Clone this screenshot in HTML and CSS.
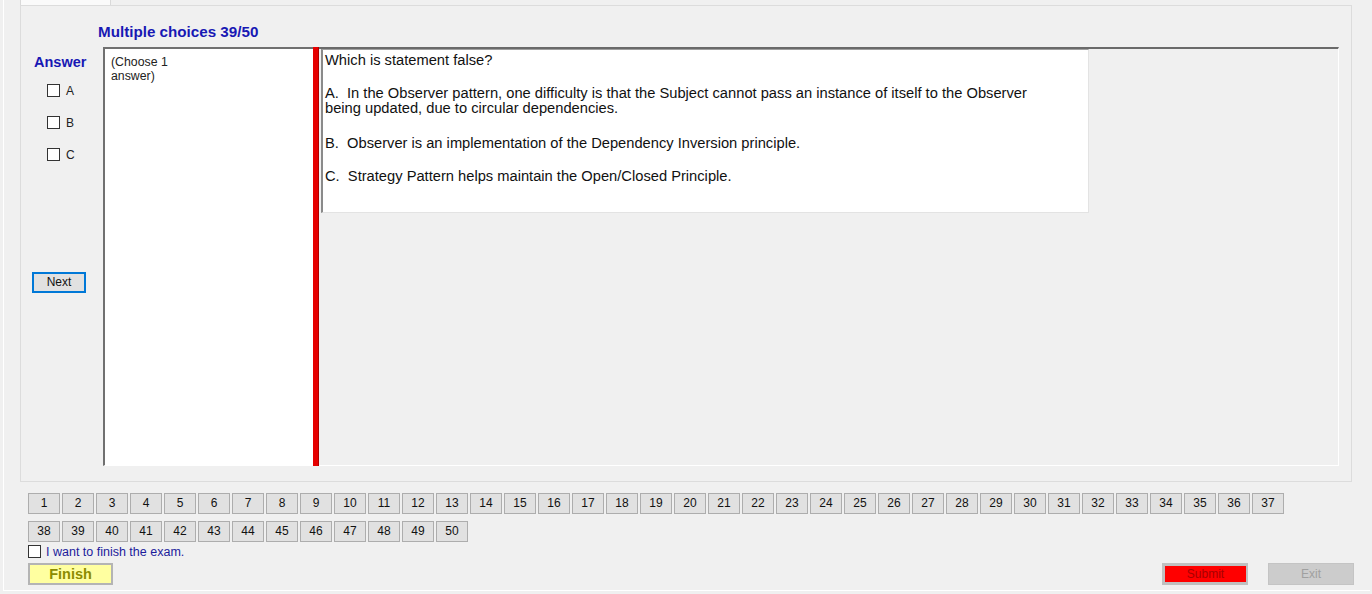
FILE: index.html
```html
<!DOCTYPE html>
<html>
<head>
<meta charset="utf-8">
<title>Exam</title>
<link rel="stylesheet" href="styles.css">
</head>
<body>
<div class="frame">
  <div class="tabstrip"><div class="tab"></div></div>
  <div class="tabpage">
    <div class="title">Multiple choices 39/50</div>
    <div class="main">
      <div class="answers">
        <div class="answer-label">Answer</div>
        <div class="options">
          <label class="opt"><span class="cb"></span><span>A</span></label>
          <label class="opt"><span class="cb"></span><span>B</span></label>
          <label class="opt"><span class="cb"></span><span>C</span></label>
        </div>
        <div class="next">Next</div>
      </div>
      <div class="choose"><div class="choose-text">(Choose 1 answer)</div></div>
      <div class="redbar"></div>
      <div class="qpanel">
        <div class="qbox">
          <p>Which is statement false?</p>
          <p class="wide">A.&nbsp; In the Observer pattern, one difficulty is that the Subject cannot pass an instance of itself to the Observer<br>being updated, due to circular dependencies.</p>
          <p>B.&nbsp; Observer is an implementation of the Dependency Inversion principle.</p>
          <p>C.&nbsp; Strategy Pattern helps maintain the Open/Closed Principle.</p>
        </div>
      </div>
    </div>
  </div>
  <div class="bottom">
    <div class="numrow">
      <span class="nb">1</span><span class="nb">2</span><span class="nb">3</span><span class="nb">4</span><span class="nb">5</span><span class="nb">6</span><span class="nb">7</span><span class="nb">8</span><span class="nb">9</span><span class="nb">10</span><span class="nb">11</span><span class="nb">12</span><span class="nb">13</span><span class="nb">14</span><span class="nb">15</span><span class="nb">16</span><span class="nb">17</span><span class="nb">18</span><span class="nb">19</span><span class="nb">20</span><span class="nb">21</span><span class="nb">22</span><span class="nb">23</span><span class="nb">24</span><span class="nb">25</span><span class="nb">26</span><span class="nb">27</span><span class="nb">28</span><span class="nb">29</span><span class="nb">30</span><span class="nb">31</span><span class="nb">32</span><span class="nb">33</span><span class="nb">34</span><span class="nb">35</span><span class="nb">36</span><span class="nb">37</span>
    </div>
    <div class="numrow row2">
      <span class="nb">38</span><span class="nb">39</span><span class="nb">40</span><span class="nb">41</span><span class="nb">42</span><span class="nb">43</span><span class="nb">44</span><span class="nb">45</span><span class="nb">46</span><span class="nb">47</span><span class="nb">48</span><span class="nb">49</span><span class="nb">50</span>
    </div>
    <label class="finish-check"><span class="cb"></span><span>I want to finish the exam.</span></label>
    <div class="actions">
      <div class="finish">Finish</div>
      <div class="submit">Submit</div>
      <div class="exit">Exit</div>
    </div>
  </div>
</div>
</body>
</html>
```
FILE: styles.css
```css
* { box-sizing: border-box; }
html, body { margin: 0; padding: 0; }
body {
  background: #f0f0f0;
  font-family: "Liberation Sans", Arial, sans-serif;
  width: 1372px;
  height: 594px;
  overflow: hidden;
}
.frame {
  margin-left: 3px;
  width: 1367px;
  height: 591px;
  border-left: 1px solid #ffffff;
  border-bottom: 1px solid #ffffff;
}
.tabstrip {
  height: 5px;
  padding-left: 16px;
  display: flex;
}
.tab {
  width: 91px;
  height: 5px;
  background: #fafafa;
  border-left: 1px solid #d9d9d9;
  border-right: 1px solid #d9d9d9;
}
.tabpage {
  margin-left: 16px;
  width: 1332px;
  height: 477px;
  border: 1px solid #dcdcdc;
  background: #f0f0f0;
}
.title {
  padding: 18px 0 0 77px;
  height: 34px;
  line-height: 16px;
  font-size: 15.2px;
  font-weight: bold;
  color: #1818b4;
  margin-bottom: 7px;
}
.main {
  display: flex;
  height: 419px;
}
.answers {
  width: 82px;
  flex: none;
}
.answer-label {
  margin-top: 7px;
  padding-left: 13px;
  font-size: 14.5px;
  line-height: 16px;
  font-weight: bold;
  color: #1818b4;
}
.options {
  margin-top: 14px;
  display: flex;
  flex-direction: column;
  gap: 19px;
  padding-left: 26px;
}
.opt {
  display: flex;
  align-items: center;
  gap: 6px;
  height: 13px;
  font-size: 12px;
  color: #222;
}
.cb {
  display: inline-block;
  width: 13px;
  height: 13px;
  border: 1px solid #333;
  background: #fff;
  flex: none;
}
.next {
  margin: 111px 0 0 11px;
  width: 54px;
  height: 21px;
  border: 2px solid #0078d7;
  background: #e1e1e1;
  font-size: 12px;
  line-height: 17px;
  text-align: center;
  color: #111;
}
.choose {
  width: 210px;
  flex: none;
  background: #fff;
  border-top: 2px solid #707070;
  border-left: 2px solid #707070;
  border-bottom: 1px solid #ffffff;
  padding: 6px 0 0 6px;
}
.choose-text {
  width: 74px;
  font-size: 12.3px;
  line-height: 14px;
  color: #222;
}
.redbar {
  width: 6px;
  flex: none;
  background: #e60000;
  border-right: 1px solid #b00000;
}
.qpanel {
  width: 1020px;
  flex: none;
  border-top: 2px solid #6a6a6a;
  border-right: 1px solid #ffffff;
  border-bottom: 1px solid #ffffff;
  padding-left: 2px;
}
.qbox {
  width: 768px;
  height: 164px;
  background: #fff;
  border-top: 1px solid #a0a0a0;
  border-left: 2px solid #8a8a8a;
  border-right: 1px solid #e3e3e3;
  border-bottom: 1px solid #e3e3e3;
  padding: 3px 0 0 2px;
  font-size: 14.7px;
  line-height: 15px;
  color: #111;
}
.qbox p {
  margin: 0 0 18px 0;
  white-space: nowrap;
}
.qbox p.wide { margin-bottom: 20px; }
.bottom {
  padding-left: 24px;
  padding-top: 11px;
}
.numrow {
  display: flex;
  gap: 2px;
}
.row2 { margin-top: 7px; }
.nb {
  width: 32px;
  height: 21px;
  border: 1px solid #adadad;
  background: #e1e1e1;
  font-size: 12px;
  line-height: 19px;
  text-align: center;
  color: #111;
}
.finish-check {
  margin-top: 3px;
  display: flex;
  align-items: center;
  gap: 5px;
  height: 13px;
  font-size: 12.5px;
  color: #1c1c9c;
}
.actions {
  margin-top: 5px;
  display: flex;
  height: 22px;
  padding-right: 16px;
}
.finish {
  width: 85px;
  height: 22px;
  border: 2px solid #b4b4b4;
  background: #ffffa0;
  font-size: 14.5px;
  font-weight: bold;
  line-height: 18px;
  text-align: center;
  color: #8c8c00;
}
.submit {
  margin-left: auto;
  width: 86px;
  height: 22px;
  border: 2px solid #c0c0c0;
  border-width: 3px 2px 3px 3px;
  background: #ff0000;
  font-size: 12px;
  line-height: 16px;
  text-align: center;
  color: #a80000;
}
.exit {
  margin-left: 20px;
  width: 86px;
  height: 22px;
  border: 1px solid #c4c4c4;
  background: #cccccc;
  font-size: 12px;
  line-height: 20px;
  text-align: center;
  color: #a0a0a0;
}
```
